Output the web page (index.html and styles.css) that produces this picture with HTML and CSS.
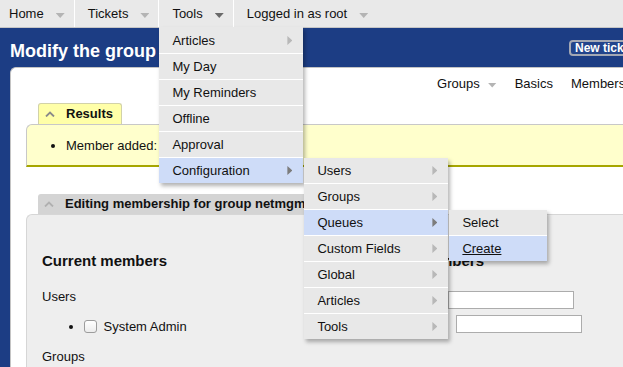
FILE: index.html
```html
<!DOCTYPE html>
<html lang="en">

<head>
  <meta charset="UTF-8">
  <meta name="viewport" content="width=device-width, initial-scale=1.0">
  <title>Modify the group netmgmt</title>
  <link rel="stylesheet" href="styles.css">
</head>

<body>
  <nav class="topbar">
    <ul class="menu">
      <li class="menu-item first">Home <span class="down"></span></li>
      <li class="menu-item">Tickets <span class="down"></span></li>
      <li class="menu-item open">Tools <span class="down"></span>
        <ul class="dropdown tools-menu">
          <li><a>Articles <span class="right"></span></a></li>
          <li><a>My Day</a></li>
          <li><a>My Reminders</a></li>
          <li><a>Offline</a></li>
          <li><a>Approval</a></li>
          <li class="active"><a>Configuration <span class="right"></span></a>
            <ul class="dropdown">
              <li><a>Users <span class="right"></span></a></li>
              <li><a>Groups <span class="right"></span></a></li>
              <li class="active"><a>Queues <span class="right"></span></a>
                <ul class="dropdown queues-menu">
                  <li><a>Select</a></li>
                  <li class="active hover"><a>Create</a></li>
                </ul>
              </li>
              <li><a>Custom Fields <span class="right"></span></a></li>
              <li><a>Global <span class="right"></span></a></li>
              <li><a>Articles <span class="right"></span></a></li>
              <li><a>Tools <span class="right"></span></a></li>
            </ul>
          </li>
        </ul>
      </li>
      <li class="menu-item last">Logged in as root <span class="down"></span></li>
    </ul>
  </nav>

  <header class="header">
    <h1>Modify the group netmgmt</h1>
    <div class="topactions">
      <span class="new-ticket">New ticket in</span>
    </div>
  </header>

  <main class="content">
    <ul class="pagenav">
      <li>Groups <span class="down"></span></li>
      <li>Basics</li>
      <li class="wide">Members</li>
    </ul>

    <section class="titlebox results">
      <div class="titlebox-title">
        <svg class="chevron" width="10" height="6" viewBox="0 0 10 6">
          <polyline points="1,5.5 5,1.5 9,5.5" fill="none" stroke-width="1.8" />
        </svg>
        Results
      </div>
      <div class="titlebox-body">
        <ul class="bullets">
          <li>Member added: System Admin</li>
        </ul>
      </div>
    </section>

    <section class="titlebox editing">
      <div class="titlebox-title">
        <svg class="chevron" width="10" height="6" viewBox="0 0 10 6">
          <polyline points="1,5.5 5,1.5 9,5.5" fill="none" stroke-width="1.8" />
        </svg>
        Editing membership for group netmgmt
      </div>
      <div class="titlebox-body">
        <div class="col-left">
          <h3>Current members</h3>
          <p class="label-line">Users</p>
          <ul class="members">
            <li><input type="checkbox"> System Admin</li>
          </ul>
          <p class="label-line small-gap">Groups</p>
        </div>
        <div class="col-right">
          <h3>Add members</h3>
          <div class="field first-field">
            <label>Add user:</label>
            <input type="text">
          </div>
          <div class="field">
            <label>Add group:</label>
            <input type="text">
          </div>
        </div>
      </div>
    </section>
  </main>
</body>

</html>
```

FILE: styles.css
```css
body {
  margin: 0;
  height: 367px;
  overflow: hidden;
  background-color: #1c3d84;
  font-family: "Liberation Sans", Arial, sans-serif;
  font-size: 13px;
  line-height: 16px;
  color: #111;
}

ul {
  list-style: none;
  margin: 0;
  padding: 0;
}

/* top menu bar */
.topbar {
  position: relative;
  z-index: 10;
  height: 27px;
  background-color: #e9e9e9;
  border-bottom: 1px solid #c6c6c6;
}

.menu {
  display: flex;
  height: 27px;
}

.menu-item {
  position: relative;
  display: flex;
  align-items: center;
  padding: 0 9px 0 13px;
  border-right: 1px solid #fff;
  white-space: nowrap;
}

.menu-item.first {
  padding-left: 9px;
}

.menu-item.last {
  border-right: 0;
}

.down {
  display: inline-block;
  width: 9px;
  height: 5px;
  margin: 4px 0 0 12px;
  background-color: #b4b4b4;
  clip-path: polygon(0 0, 100% 0, 50% 100%);
}

.open > .down {
  background-color: #6a6a6a;
}

.right {
  display: inline-block;
  width: 5px;
  height: 9px;
  background-color: #b8b8b8;
  clip-path: polygon(0 0, 100% 50%, 0 100%);
}

.active > a > .right {
  background-color: #7c7c7c;
}

/* dropdowns */
.dropdown {
  position: absolute;
  z-index: 1;
  top: 0;
  left: calc(100% + 1px);
  width: 144px;
  background-color: #e8e8e8;
  box-shadow: 2px 3px 4px rgba(0, 0, 0, 0.3);
}

.tools-menu {
  top: 27px;
  left: 0;
  padding-top: 1px;
}

.queues-menu {
  width: 98px;
}

.dropdown li {
  position: relative;
}

.dropdown a {
  display: flex;
  align-items: center;
  justify-content: space-between;
  height: 25px;
  padding: 0 11px 0 13px;
  border-bottom: 1px solid #fff;
  color: #111;
  white-space: nowrap;
}

.dropdown li:last-child > a {
  border-bottom: 0;
}

.dropdown .active > a {
  background-color: #cedcf8;
}

.dropdown .hover > a {
  text-decoration: underline;
}

/* blue header */
.header {
  display: flex;
  align-items: flex-start;
  height: 22px;
  padding: 12px 0 5px 10px;
}

.header h1 {
  margin: 0;
  font-size: 18px;
  line-height: 22px;
  color: #fff;
  white-space: nowrap;
}

.topactions {
  margin-left: auto;
  width: 54px;
  white-space: nowrap;
}

.new-ticket {
  display: inline-block;
  padding: 0 4px;
  border: 2px solid #a3a8b4;
  border-radius: 4px;
  background-color: #22448b;
  color: #fff;
  font-size: 12px;
  font-weight: bold;
  line-height: 12px;
}

/* white page area */
.content {
  min-height: 320px;
  margin-left: 10px;
  padding: 8px 0 0 15px;
  background-color: #fff;
  border-top: 1px solid #c4c4c4;
  border-left: 1px solid #c4c4c4;
  border-top-left-radius: 6px;
}

.pagenav {
  display: flex;
  justify-content: flex-end;
  gap: 18px;
  height: 16px;
}

.pagenav li {
  display: flex;
  align-items: center;
  white-space: nowrap;
}

.pagenav .down {
  margin: 2px 0 0 8px;
}

.pagenav .wide {
  width: 52px;
}

/* title boxes */
.titlebox {
  margin-top: 11px;
}

.titlebox-title {
  display: flex;
  align-items: center;
  gap: 11px;
  width: fit-content;
  height: 20px;
  margin-left: 12px;
  padding: 0 8px 0 6px;
  border-radius: 3px 3px 0 0;
  font-weight: bold;
  white-space: nowrap;
}

.titlebox-body {
  border-top: 1px solid #c8c8c8;
  border-left: 1px solid #c8c8c8;
  border-top-left-radius: 6px;
}

.results .titlebox-title {
  border: 1px solid #d2d2a8;
  border-bottom: 0;
  background-color: #ffffa8;
}

.results .chevron {
  stroke: #8a8a8a;
}

.results .titlebox-body {
  padding: 13px 0 11px;
  background-color: #ffffcc;
  border-bottom: 2px solid #a6a600;
}

.bullets {
  padding-left: 39px;
  list-style: disc;
}

.editing {
  margin-top: 27px;
}

.editing .titlebox-title {
  background-color: #d4d4d4;
}

.editing .chevron {
  stroke: #b0b0b0;
}

.editing .titlebox-body {
  display: flex;
  min-height: 200px;
  padding: 37px 0 0 15px;
  background-color: #eeeeee;
  border-color: #d6d6d6;
}

.col-left {
  width: 342px;
}

.titlebox-body h3 {
  margin: 0;
  font-size: 15px;
  line-height: 18px;
  white-space: nowrap;
}

.label-line {
  margin: 19px 0 0;
}

.label-line.small-gap {
  margin-top: 14px;
}

.members {
  margin-top: 14px;
  padding-left: 42px;
  list-style: disc;
}

.members input {
  appearance: none;
  width: 13px;
  height: 13px;
  margin: 0 3px 0 0;
  vertical-align: -2px;
  border: 1px solid #9c9c9c;
  border-radius: 3px;
  background: linear-gradient(#fff, #ececec);
}

.field {
  display: flex;
  align-items: center;
  gap: 8px;
  margin-top: 6px;
  white-space: nowrap;
}

.field.first-field {
  margin-top: 21px;
}

.field input {
  box-sizing: border-box;
  width: 126px;
  height: 18px;
  margin: 0;
  padding: 0 2px;
  border: 1px solid #acacac;
  background-color: #fff;
}
```
